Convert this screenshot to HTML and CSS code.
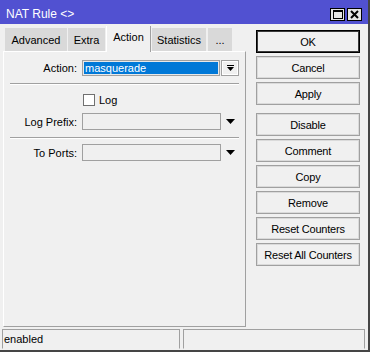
FILE: index.html
```html
<!DOCTYPE html>
<html>
<head>
<meta charset="utf-8">
<link rel="stylesheet" href="styles.css">
</head>
<body>
<div class="window">
  <div class="titlebar">
    <span class="title">NAT Rule &lt;&gt;</span>
    <div class="tbtns">
      <span class="tbtn"><svg width="10" height="9" viewBox="0 0 10 9"><rect x="0.5" y="1" width="9" height="7.5" fill="none" stroke="#000" stroke-width="1"/><rect x="0" y="0" width="10" height="2" fill="#000"/></svg></span>
      <span class="tbtn"><svg width="9" height="9" viewBox="0 0 9 9"><path d="M1 1 L8 8 M8 1 L1 8" stroke="#000" stroke-width="2"/></svg></span>
    </div>
  </div>
  <div class="main">
    <div class="left">
      <div class="tabs">
        <div class="tab tab-adv">Advanced</div>
        <div class="tab tab-extra">Extra</div>
        <div class="tab tab-action active">Action</div>
        <div class="tab tab-stats">Statistics</div>
        <div class="tab tab-more">...</div>
      </div>
      <div class="panel">
        <div class="row row-action">
          <span class="lbl">Action:</span>
          <div class="field field-sel">masquerade</div>
          <div class="ddbtn"><svg width="7" height="7" viewBox="0 0 7 7"><rect x="0" y="0" width="7" height="1" fill="#000"/><polygon points="0,2 7,2 3.5,6" fill="#000"/></svg></div>
        </div>
        <div class="sep"></div>
        <div class="row row-check">
          <span class="cbox"></span>
          <span class="cbtext">Log</span>
        </div>
        <div class="row row-prefix">
          <span class="lbl">Log Prefix:</span>
          <div class="field"></div>
          <svg class="arrow" width="9" height="5" viewBox="0 0 9 5"><polygon points="0,0 9,0 4.5,5" fill="#000"/></svg>
        </div>
        <div class="sep"></div>
        <div class="row row-ports">
          <span class="lbl">To Ports:</span>
          <div class="field"></div>
          <svg class="arrow" width="9" height="5" viewBox="0 0 9 5"><polygon points="0,0 9,0 4.5,5" fill="#000"/></svg>
        </div>
      </div>
    </div>
    <div class="buttons">
      <div class="btn btn-default">OK</div>
      <div class="btn">Cancel</div>
      <div class="btn">Apply</div>
      <div class="btn btn-gap">Disable</div>
      <div class="btn">Comment</div>
      <div class="btn">Copy</div>
      <div class="btn">Remove</div>
      <div class="btn">Reset Counters</div>
      <div class="btn">Reset All Counters</div>
    </div>
  </div>
  <div class="status">
    <div class="pane pane-1">enabled</div>
    <div class="pane pane-2"></div>
  </div>
</div>
</body>
</html>
```

FILE: styles.css
```css
html, body {
  margin: 0;
  padding: 0;
  background: #ffffff;
}
body {
  font-family: "Liberation Sans", Arial, sans-serif;
  font-size: 11px;
  color: #000;
}
.window {
  width: 368px;
  height: 350px;
  background: #f0f0f0;
  border-right: 2px solid #454545;
  border-bottom: 2px solid #454545;
  display: flex;
  flex-direction: column;
}
.titlebar {
  height: 24px;
  box-sizing: border-box;
  background: #5151d1;
  color: #fff;
  display: flex;
  justify-content: space-between;
  align-items: flex-start;
  padding: 7px 6px 0 6px;
  font-size: 12px;
  line-height: 14px;
}
.tbtns {
  display: flex;
  gap: 2px;
  margin-top: 1px;
}
.tbtn {
  width: 15px;
  height: 13px;
  box-sizing: border-box;
  background: #e4e4e4;
  border: 1px solid #000;
  display: flex;
  align-items: center;
  justify-content: center;
}
.main {
  height: 305px;
  display: flex;
}
.left {
  width: 243px;
  padding-left: 3px;
  display: flex;
  flex-direction: column;
}
.tabs {
  height: 27px;
  display: flex;
  align-items: flex-end;
  gap: 1px;
  padding-left: 2px;
  position: relative;
  z-index: 2;
}
.tab {
  height: 23px;
  box-sizing: border-box;
  background: #d9d9d9;
  padding-top: 6px;
  line-height: 13px;
  text-align: center;
  white-space: nowrap;
}
.tab-adv { width: 62px; }
.tab-extra { width: 37px; }
.tab-action { width: 45px; }
.tab-stats { width: 54px; }
.tab-more { width: 24px; margin-left: 1px; }
.tab.active {
  height: 26px;
  margin-bottom: -1px;
  background: #f0f0f0;
  padding-top: 5px;
  border-left: 1px solid #ffffff;
  border-right: 1px solid #a0a0a0;
}
.panel {
  height: 276px;
  box-sizing: border-box;
  border-top: 1px solid #ffffff;
  border-left: 1px solid #ffffff;
  border-right: 1px solid #a0a0a0;
  border-bottom: 1px solid #a0a0a0;
  display: flex;
  flex-direction: column;
}
.row {
  display: flex;
  align-items: center;
}
.row-action {
  margin-top: 8px;
  height: 16px;
}
.row-check {
  margin-top: 9px;
  height: 12px;
}
.row-prefix {
  margin-top: 7px;
  height: 17px;
}
.row-ports {
  margin-top: 5px;
  height: 17px;
}
.lbl {
  width: 73px;
  text-align: right;
  margin-right: 5px;
  white-space: nowrap;
}
.field {
  width: 139px;
  height: 17px;
  box-sizing: border-box;
  border: 1px solid #a0a0a0;
  background: #f0f0f0;
}
.field-sel {
  width: 138px;
  height: 16px;
  background: #0078d7;
  color: #fff;
  box-shadow: inset 0 0 0 1px #e8e8e8;
  padding-left: 2px;
  line-height: 14px;
}
.ddbtn {
  width: 18px;
  height: 16px;
  margin-left: 1px;
  box-sizing: border-box;
  border: 1px solid #a0a0a0;
  box-shadow: inset 0 0 0 1px #ffffff;
  display: flex;
  align-items: center;
  justify-content: center;
}
.arrow {
  margin-left: 5px;
}
.sep {
  margin-top: 7px;
  margin-left: 6px;
  width: 229px;
  height: 1px;
  background: #a0a0a0;
  border-bottom: 1px solid #ffffff;
}
.cbox {
  width: 12px;
  height: 12px;
  box-sizing: border-box;
  margin-left: 79px;
  border: 1px solid #707070;
  background: #ffffff;
}
.cbtext {
  margin-left: 4px;
}
.buttons {
  margin-left: 10px;
  padding-top: 6px;
  display: flex;
  flex-direction: column;
  gap: 3px;
}
.btn {
  width: 104px;
  height: 23px;
  box-sizing: border-box;
  border: 1px solid #a0a0a0;
  box-shadow: inset 0 0 0 1px #dadada;
  background: #f0f0f0;
  display: flex;
  align-items: center;
  justify-content: center;
  white-space: nowrap;
  letter-spacing: -0.2px;
}
.btn-default {
  border-color: #000;
  box-shadow: inset 0 0 0 1px #3a3a3a;
}
.btn-gap {
  margin-top: 5px;
}
.status {
  height: 21px;
  display: flex;
  padding-left: 2px;
  gap: 3px;
}
.pane {
  height: 20px;
  box-sizing: border-box;
  border: 1px solid #a0a0a0;
  border-bottom-color: #f0f0f0;
  padding-left: 1px;
  line-height: 18px;
}
.pane-1 {
  width: 178px;
}
.pane-2 {
  width: 182px;
}
```
